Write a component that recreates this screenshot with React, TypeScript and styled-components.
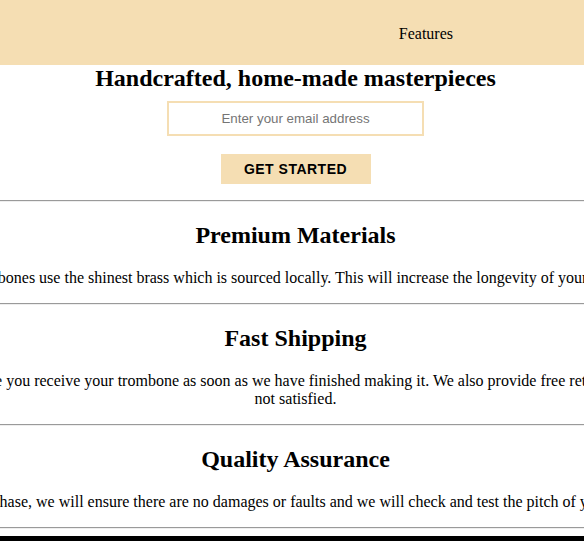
import React from "react";
import styled, { createGlobalStyle } from "styled-components";

const GlobalStyle = createGlobalStyle`
  html, body {
    margin: 0;
    padding: 0;
    overflow: hidden;
    background: #ffffff;
  }
  body {
    font-family: "Liberation Serif", "Times New Roman", serif;
    font-size: 16px;
    color: #000000;
  }
`;

const Page = styled.div`
  width: 100%;
  height: 541px;
  overflow: hidden;
`;

const Header = styled.header`
  height: 65px;
  background: #f5deb3;
  display: flex;
  align-items: center;
  justify-content: flex-end;
  padding-right: 131px;
`;

const Nav = styled.nav`
  display: flex;
  gap: 24px;
`;

const NavLink = styled.a`
  color: #000000;
  text-decoration: none;
  font-size: 16px;
  margin-top: 2px;
`;

const Centered = styled.section`
  display: flex;
  flex-direction: column;
  align-items: center;
  padding-left: 7px;
`;

const Title = styled.h1`
  margin: 0;
  font-size: 24px;
  font-weight: bold;
  white-space: nowrap;
`;

const Form = styled.form`
  display: flex;
  flex-direction: column;
  align-items: center;
  margin-top: 9px;
`;

const EmailInput = styled.input`
  box-sizing: border-box;
  width: 257px;
  height: 35px;
  border: 2px solid #f5deb3;
  outline: none;
  text-align: center;
  font-family: "Liberation Sans", Arial, sans-serif;
  font-size: 13.333px;
  color: #000;
  &::placeholder {
    color: #757575;
  }
`;

const SubmitButton = styled.button`
  box-sizing: border-box;
  margin-top: 18px;
  width: 150px;
  height: 30px;
  border: none;
  background: #f5deb3;
  font-family: "Liberation Sans", Arial, sans-serif;
  font-weight: bold;
  font-size: 14px;
  letter-spacing: 0.5px;
  color: #000000;
  cursor: pointer;
`;

const Divider = styled.hr<{ $top?: number }>`
  margin: ${(p) => p.$top ?? 0}px 0 0 0;
  height: 0;
  border: none;
  border-top: 1px solid #9a9a9a;
  border-bottom: 1px solid #eeeeee;
`;

const FeatureTitle = styled.h2`
  margin: 20px 0;
  font-size: 24px;
  font-weight: bold;
  white-space: nowrap;
`;

const FeatureText = styled.p<{ $width: number }>`
  margin: 0 0 16px 0;
  width: ${(p) => p.$width}px;
  flex-shrink: 0;
  text-align: center;
  line-height: normal;
`;

const Footer = styled.footer`
  margin-top: 7px;
  height: 40px;
  background: #000000;
`;

const features = [
  {
    title: "Premium Materials",
    text: "Our trombones use the shinest brass which is sourced locally. This will increase the longevity of your purchase.",
    width: 800,
  },
  {
    title: "Fast Shipping",
    text: "We make sure you receive your trombone as soon as we have finished making it. We also provide free returns if you are not satisfied.",
    width: 768,
  },
  {
    title: "Quality Assurance",
    text: "For every purchase, we will ensure there are no damages or faults and we will check and test the pitch of your instrument.",
    width: 800,
  },
];

export default function App() {
  return (
    <Page>
      <GlobalStyle />
      <Header>
        <Nav>
          <NavLink href="#features">Features</NavLink>
        </Nav>
      </Header>
      <Centered>
        <Title>Handcrafted, home-made masterpieces</Title>
        <Form onSubmit={(e) => e.preventDefault()}>
          <EmailInput type="email" placeholder="Enter your email address" />
          <SubmitButton type="submit">GET STARTED</SubmitButton>
        </Form>
      </Centered>
      <Divider $top={16} />
      {features.map((f) => (
        <React.Fragment key={f.title}>
          <Centered>
            <FeatureTitle>{f.title}</FeatureTitle>
            <FeatureText $width={f.width}>{f.text}</FeatureText>
          </Centered>
          <Divider />
        </React.Fragment>
      ))}
      <Footer />
    </Page>
  );
}
